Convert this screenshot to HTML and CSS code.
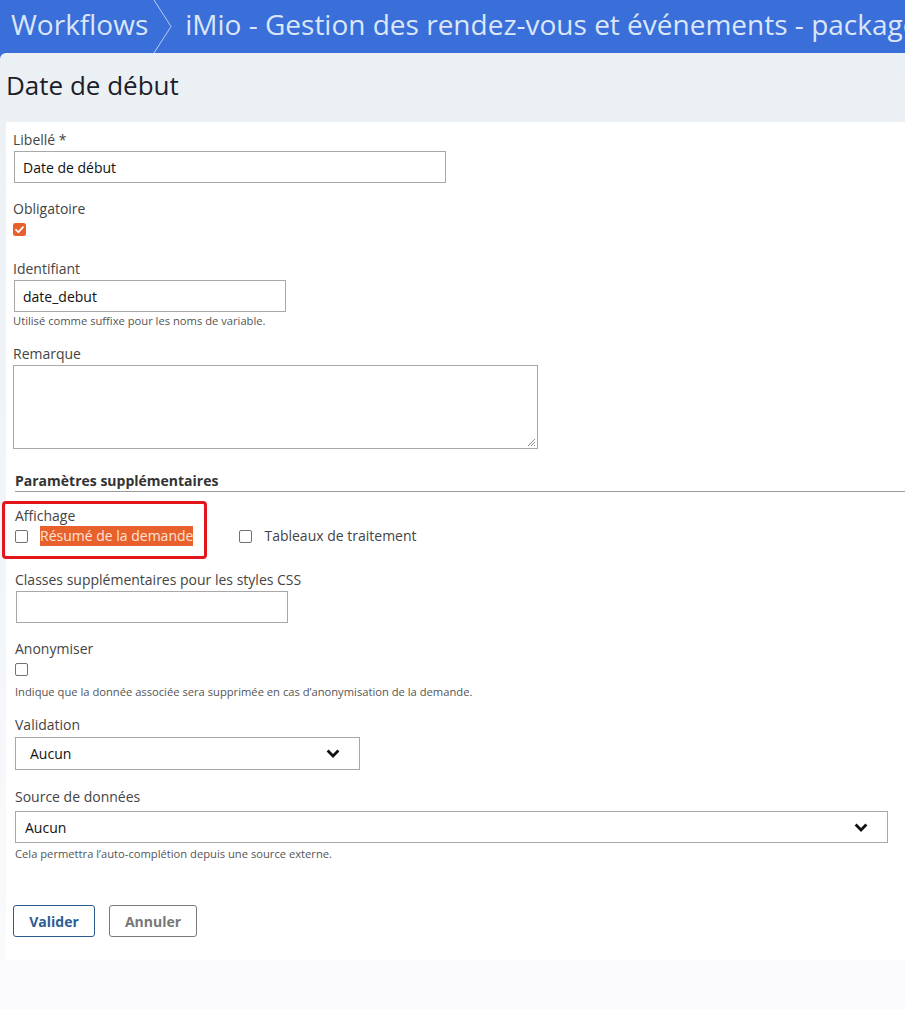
FILE: index.html
```html
<!DOCTYPE html>
<html lang="fr">
<head>
<meta charset="utf-8">
<title>Date de début</title>
<link rel="stylesheet" href="styles.css">
</head>
<body>
<div class="app">
  <header class="topbar">
    <span class="crumb">Workflows</span>
    <svg class="sep" viewBox="0 0 20 53" width="20" height="53"><polyline points="1,0 18,26.5 1,53" fill="none" stroke="#b9cdf3" stroke-width="1"/></svg>
    <span class="crumb">iMio - Gestion des rendez-vous et événements - package</span>
  </header>
  <main class="content">
    <h1 class="page-title">Date de début</h1>
    <form class="panel">
      <div class="field">
        <label class="label">Libellé *</label>
        <input class="text-input w-label" type="text" value="Date de début">
      </div>
      <div class="field gap16">
        <label class="label">Obligatoire</label>
        <span class="check checked"><svg viewBox="0 0 13 13" width="13" height="13"><polyline points="3,6.8 5.4,9.2 10,4.2" fill="none" stroke="#fff" stroke-width="1.8" stroke-linecap="round" stroke-linejoin="round"/></svg></span>
      </div>
      <div class="field gap23">
        <label class="label">Identifiant</label>
        <input class="text-input w-short" type="text" value="date_debut">
        <p class="hint hint-tight">Utilisé comme suffixe pour les noms de variable.</p>
      </div>
      <div class="field gap16">
        <label class="label">Remarque</label>
        <div class="textarea"><svg class="grip" viewBox="0 0 10 10" width="10" height="10"><path d="M9 2 L2 9 M9 5 L5 9 M9 8 L8 9" stroke="#888" stroke-width="1"/></svg></div>
      </div>

      <div class="extra">
        <h2 class="section-title">Paramètres supplémentaires</h2>
        <div class="field gap14 marked">
          <span class="label">Affichage</span>
          <div class="options">
            <span class="option"><span class="check"></span><span class="opt-text selected">Résumé de la demande</span></span>
            <span class="option"><span class="check"></span><span class="opt-text">Tableaux de traitement</span></span>
          </div>
        </div>
        <div class="field gap24">
          <label class="label">Classes supplémentaires pour les styles CSS</label>
          <input class="text-input w-short shift1" type="text" value="">
        </div>
        <div class="field gap16">
          <label class="label">Anonymiser</label>
          <span class="check"></span>
          <p class="hint hint-loose">Indique que la donnée associée sera supprimée en cas d’anonymisation de la demande.</p>
        </div>
        <div class="field gap16">
          <label class="label">Validation</label>
          <div class="select select-small"><span>Aucun</span><svg class="chev" viewBox="0 0 14 9" width="14" height="9"><polyline points="1.6,1.6 7,7 12.4,1.6" fill="none" stroke="#111" stroke-width="2.8"/></svg></div>
        </div>
        <div class="field gap17">
          <label class="label">Source de données</label>
          <div class="select select-wide"><span>Aucun</span><svg class="chev" viewBox="0 0 14 9" width="14" height="9"><polyline points="1.6,1.6 7,7 12.4,1.6" fill="none" stroke="#111" stroke-width="2.8"/></svg></div>
          <p class="hint hint-3">Cela permettra l’auto-complétion depuis une source externe.</p>
        </div>
      </div>

      <div class="buttons">
        <button type="button" class="btn btn-primary">Valider</button>
        <button type="button" class="btn btn-cancel">Annuler</button>
      </div>
    </form>
  </main>
</div>
</body>
</html>
```
FILE: styles.css
```css
html, body {
  margin: 0;
  padding: 0;
}
body {
  font-family: "Open Sans", "Liberation Sans", sans-serif;
  background: #3a6ed8;
}
.app {
  background: #3a6ed8;
}
.topbar {
  height: 53px;
  display: flex;
  align-items: flex-start;
  padding-left: 11px;
  white-space: nowrap;
  overflow: hidden;
  color: #dbe6f9;
  font-size: 28px;
}
.crumb {
  line-height: 48px;
}
.sep {
  flex: 0 0 20px;
  margin: 0 12px 0 5px;
}
.content {
  border-top-left-radius: 6px;
  background: linear-gradient(#ebf0f4 0%, #f3f6f9 60%, #fbfbfd 100%);
  min-height: calc(100vh - 53px);
  padding-top: 16px;
  box-sizing: border-box;
}
.page-title {
  margin: 0 0 21px 6px;
  font-size: 26px;
  line-height: 32px;
  font-weight: 400;
  color: #1c1e2a;
}
.panel {
  margin: 0 0 0 6px;
  background: #fff;
  padding: 8px 0 23px 7px;
}
.field {
  position: relative;
}
.gap14 { margin-top: 14px; }
.gap16 { margin-top: 16px; }
.gap17 { margin-top: 17px; }
.gap23 { margin-top: 23px; }
.gap24 { margin-top: 24px; }
.label {
  display: block;
  font-size: 14px;
  line-height: 20px;
  color: #444;
}
.text-input {
  display: block;
  box-sizing: border-box;
  height: 32px;
  margin: 1px 0 0 1px;
  padding: 0 8px;
  border: 1px solid #a8a8a8;
  border-radius: 0;
  background: #fff;
  font-family: "Open Sans", "Liberation Sans", sans-serif;
  font-size: 14px;
  color: #111;
  outline: none;
}
.w-label { width: 432px; }
.w-short { width: 272px; }
.shift1 { margin-left: 1px; }
.check {
  display: block;
  box-sizing: border-box;
  width: 13px;
  height: 13px;
  margin: 4px 0 0 0;
  border: 1.5px solid #727272;
  border-radius: 2px;
  background: #fff;
}
.check.checked {
  border: 0;
  background: #e8612c;
  border-radius: 2.5px;
}
.check svg { display: block; }
.hint {
  margin: 0;
  font-size: 11.2px;
  line-height: 15px;
  color: #555;
}
.hint-tight { margin-top: 1px; }
.hint-loose { margin-top: 8px; }
.hint-3 { margin-top: 3px; }
.textarea {
  position: relative;
  box-sizing: border-box;
  width: 525px;
  height: 84px;
  margin: 1px 0 0 0;
  border: 1px solid #a8a8a8;
  background: #fff;
}
.grip {
  position: absolute;
  right: 1px;
  bottom: 1px;
}
.extra {
  padding-left: 2px;
  margin-top: 22px;
}
.section-title {
  margin: 0;
  font-size: 14px;
  line-height: 20px;
  font-weight: 700;
  color: #333;
  border-bottom: 1px solid #9a9a9a;
}
.marked::after {
  content: "";
  position: absolute;
  left: -13px;
  top: -5px;
  width: 205px;
  height: 58px;
  box-sizing: border-box;
  border: 3px solid #e3161c;
  border-radius: 4px;
  pointer-events: none;
}
.options {
  display: flex;
  align-items: center;
  gap: 46px;
  height: 20px;
}
.option {
  display: flex;
  align-items: center;
  gap: 12px;
}
.option .check {
  margin: 0;
}
.opt-text {
  font-size: 14px;
  line-height: 20px;
  color: #444;
}
.opt-text.selected {
  background: #e8612c;
  color: #fde3d6;
}
.select {
  display: flex;
  align-items: center;
  justify-content: space-between;
  box-sizing: border-box;
  border: 1px solid #a8a8a8;
  background: #fff;
  font-size: 14px;
  color: #111;
  padding-right: 19px;
}
.select-small {
  width: 345px;
  height: 33px;
  margin-top: 2px;
  padding-left: 14px;
}
.select-wide {
  width: 873px;
  height: 32px;
  margin-top: 4px;
  padding-left: 9px;
}
.chev { display: block; }
.buttons {
  display: flex;
  gap: 14px;
  margin: 44px 0 0 0;
}
.btn {
  box-sizing: border-box;
  height: 32px;
  padding: 0;
  background: #fff;
  border: 1px solid;
  border-radius: 3px;
  font-family: "Open Sans", "Liberation Sans", sans-serif;
  font-size: 14px;
  font-weight: 700;
}
.btn-primary {
  width: 82px;
  border-color: #2b5b8e;
  color: #2d5e93;
}
.btn-cancel {
  width: 88px;
  border-color: #7a7a7a;
  color: #777;
}
```
